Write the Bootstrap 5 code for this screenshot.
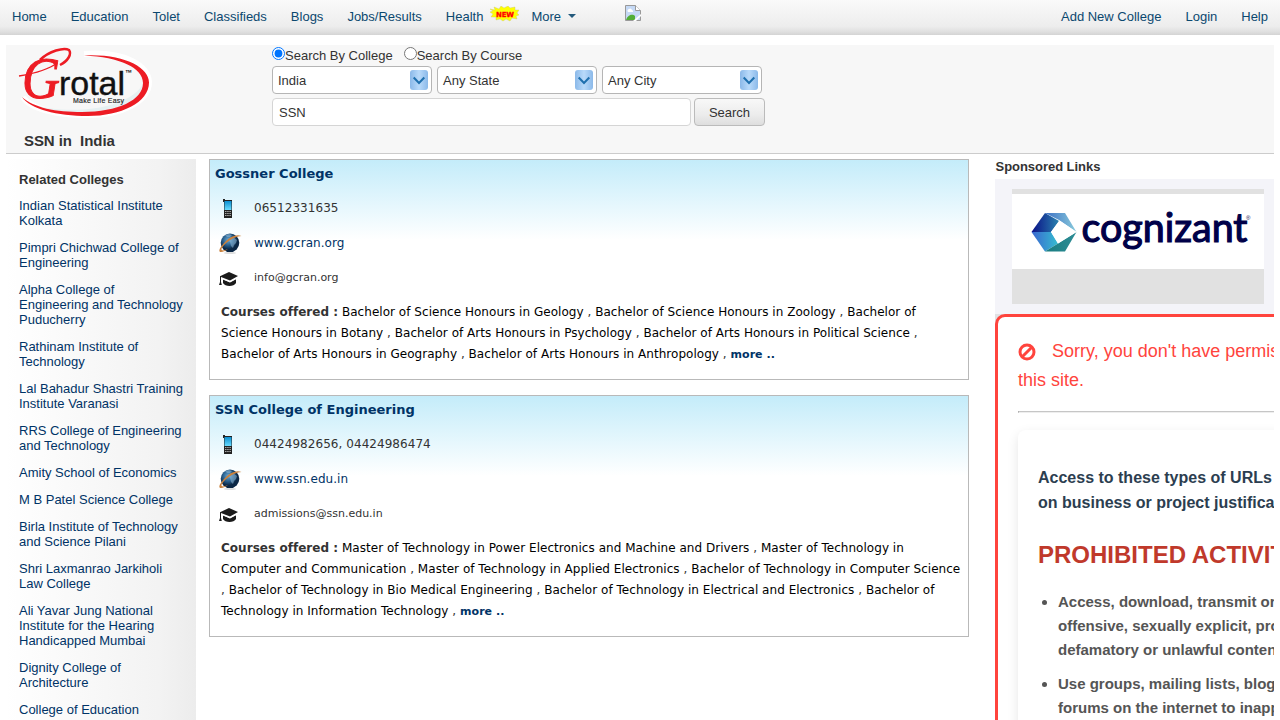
<!DOCTYPE html>
<html lang="en">
<head>
<meta charset="utf-8">
<meta name="viewport" content="width=device-width, initial-scale=1">
<title>SSN in India</title>
<link rel="stylesheet" href="https://cdn.jsdelivr.net/npm/bootstrap@5.3.0/dist/css/bootstrap.min.css">
<style>
html,body{height:720px;overflow:hidden}
body{font:13px/15px "Liberation Sans",Arial,sans-serif;color:#333;background:#fff}
a{text-decoration:none;color:#036}
.topbar{height:35px;background:linear-gradient(#fafafa,#ededed 75%,#e2e2e2 88%,#d4d4d4);padding:0 0 3px}
.topbar a{color:#0b486f;padding:0 12px;white-space:nowrap}
.topbar .newtag{margin-left:-5px;margin-top:-5px}
.masthead{height:109px;margin:10px 6px 0;background:#f7f7f7;border-bottom:1px solid #ccc}
.brandcol{width:266px;padding:1px 0 0 10px}
.pagehead{font-size:15px;line-height:18px;font-weight:bold;margin:11px 0 0 8px;white-space:pre;letter-spacing:-.07px}
.radios{height:21px;padding-top:2px}
.radios input{width:13px;height:13px;margin:0}
.radios label{padding-top:1px;line-height:15px}
.pick{width:160px;height:28px;border:1px solid #b5b5b5;border-radius:4px;background:#fff;padding:0 3px 0 5px}
.query{width:419px;height:28px;border:1px solid #d5d5d5;border-radius:4px;padding:0 6px;font-size:13px;color:#333}
.go{width:71px;height:28px;border:1px solid #bbb;border-radius:4px;background:linear-gradient(#f8f8f8,#ececec 60%,#dedede);padding:1px 0 0;font-size:13px;line-height:24px;color:#333}
.main-area{margin:5px 6px 0;height:561px}
.related{width:190px;height:561px;padding:13px 8px 0 13px;background:linear-gradient(90deg,#fff,#fbfbfb 25%,#f3f3f3 80%,#ececec);overflow:hidden}
.related h2{font-size:13px;line-height:15px;font-weight:bold;margin:0 0 11px}
.related a{display:block;margin-bottom:12px}
.listing{width:760px;margin-left:13px;font-family:"DejaVu Sans",Verdana,sans-serif;font-size:12px}
.college{border:1px solid #b9b9b9;background:linear-gradient(#c4ecfa,#fff 80px);margin-bottom:15px;padding:5px 5px 14px}
.college h3{font-size:13px;line-height:18px;font-weight:bold;color:#036;margin:0 0 8px}
.info{height:35px;line-height:35px;letter-spacing:.05px}
.info .glyph{width:39px;padding-left:4px}
.mailrow{font-size:11px;height:34px;line-height:33px;letter-spacing:0}
.courses{line-height:21px;margin:7px 0 0 6px;color:#000;white-space:nowrap;letter-spacing:.033px}
.courses i{font-style:normal;color:#333}
.courses b{color:#333}.courses a{font-size:11px;font-weight:bold}
.ads{width:279px;margin-left:26px;overflow:hidden}
.ads h2{font-size:13px;line-height:15px;font-weight:bold;margin:0 0 5px .5px;letter-spacing:-.04px}
.adbox{height:135px;background:#f4f4f9;padding:10px 10px 0 17px}
.adframe{height:115px;background:#e1e1e1;padding-top:5px}
.adframe svg{display:block;background:#fff}
.corner{background:#e1e1e4;width:600px}
.denied{width:600px;height:600px;border:3px solid #ff443d;border-radius:10px;background:#fff;padding:20px;white-space:nowrap}
.sorry{font-size:18px;line-height:29px;color:#ff443d}
.rule{border-top:1px solid #c6c6c6;border-left:1px solid #999;border-bottom:1px solid #eee;height:2px;margin:16px 0 17px}
.policy{height:400px;border-radius:8px;box-shadow:0 4px 12px rgba(0,0,0,.1);padding:35px 20px;font-weight:bold}
.policy p{font-size:16px;line-height:25px;color:#2c3e50;margin:0 0 23px}
.policy h4{font-size:24px;line-height:34px;font-weight:bold;color:#c0392b;margin:0 0 18px}
.policy ul{padding-left:20px;margin:0;font-size:15px;line-height:24px;color:#555}
.policy li{margin-bottom:10px}
</style>
</head>
<body>
<svg width="0" height="0" class="position-absolute">
<defs>
<linearGradient id="scr" x1="0" y1="0" x2="0" y2="1"><stop stop-color="#0b8ed0"/><stop offset="1" stop-color="#69dcff"/></linearGradient>
<radialGradient id="sea" cx=".4" cy=".35"><stop stop-color="#69a9d4"/><stop offset=".55" stop-color="#2a618f"/><stop offset="1" stop-color="#0b2745"/></radialGradient>
<linearGradient id="arrow"><stop stop-color="#8bb9e9"/><stop offset=".5" stop-color="#b9dafa"/><stop offset="1" stop-color="#8bb9e9"/></linearGradient>
<symbol id="phone" viewBox="0 0 10 19"><path d="M0 0h2v1h7v18H1V3H0z" fill="#222"/><path d="M1.500 2h7v9h-7z" fill="url(#scr)"/><path d="M2 12.500h6M2 14.500h6M2 16.500h6" stroke="#aaa" stroke-dasharray="1.500 .7"/></symbol>
<symbol id="globe" viewBox="0 0 23 21"><ellipse cx="11" cy="20" rx="6" ry="1" fill="#ddd"/><circle cx="11" cy="9.800" r="9.300" fill="url(#sea)"/><path d="M6 2l4-1 3 1-2 2-3 0zM10 5l4-1 4 3-1 3-2 2-1 3-2-2-1-4-2-2z" fill="#9cc3df" opacity=".5"/><path d="M22.500 3C18 1 12 3 7 8 3 12-1 17 .800 18.700 2.500 19.800 7 17.500 9 16 5 17.800 2 18 2.500 15.800 4 12 13 3.500 22.500 3z" fill="#c9813d"/></symbol>
<symbol id="cap" viewBox="0 0 19 15"><path d="M10 0l9 4-8 4.500L2 5v5l.8 3H0l1-3V4.200z" fill="#1b1b1b"/><path d="M4 7.500l7 3 6-3.200V11c-2 4-11 4-13 0z" fill="#1b1b1b"/><path d="M3.500 6.800l7.500 3 7-3.800" fill="none" stroke="#fff" stroke-width=".8"/></symbol>
<symbol id="drop" viewBox="0 0 18 20"><rect width="18" height="20" rx="3" fill="url(#arrow)"/><path d="M3.700 7.500l5.300 5.500 5.300-5.500" fill="none" stroke="#1f70ae" stroke-width="2"/></symbol>
</defs>
</svg>

<nav class="topbar d-flex align-items-center">
<a href="#">Home</a><a href="#">Education</a><a href="#">Tolet</a><a href="#">Classifieds</a><a href="#">Blogs</a><a href="#">Jobs/Results</a><a href="#">Health</a>
<svg class="newtag" width="29" height="16" viewBox="0 0 29 16"><path d="M0 3l5 1-1-3 5 2 2-3 3 2 4-2 2 2 5-1 0 3 4 0-2 3 2 2-3 1 1 3-5-1-2 3-4-2-3 2-3-2-4 1 0-3-5 0 2-3-3-2 3-1z" fill="#ff0" stroke="#c8c86a" stroke-width=".4"/><text x="6" y="10.500" font-family="DejaVu Sans" font-weight="bold" font-size="7" textLength="18" fill="#f00" stroke="#f00" stroke-width=".3">NEW</text></svg>
<a href="#" class="more">More <svg width="8" height="4" viewBox="0 0 8 4" style="vertical-align:3px;margin-left:3px"><path d="M0 0h8L4 4z" fill="#245a7c"/></svg></a>
<svg class="broken" width="16" height="16" viewBox="0 0 16 16" style="margin:-6px 0 0 37px"><path d="M.5.5h10l5 5v10H.5z" fill="#c5d9f5" stroke="#999"/><path d="M10.500.5v5h5" fill="#fff" stroke="#999"/><path d="M3 7a2 2 0 011-3 2 2 0 013 1 1.500 1.500 0 011 2z" fill="#fff"/><path d="M1 15c2-6 7-6 9-4v4z" fill="#52ae37"/><path d="M8 16l8-7v2l-5 5z" fill="#fff"/></svg>
<div class="ms-auto d-flex"><a href="#">Add New College</a><a href="#">Login</a><a href="#">Help</a></div>
</nav>

<header class="masthead d-flex">
<div class="brandcol">
<svg class="d-block" width="140" height="75" viewBox="16 46 140 75">
<path d="M84 54c42-3 64 12 65 28 0 20-28 33-61 33-31 0-58-6-65-18" fill="none" stroke="#fff" stroke-width="6"/>
<path d="M32 104c30 11 98 8 112-22 4 18-24 31-56 31-24 0-44-4-56-9z" fill="#e6f0f1"/>
<path d="M84 55.500c40-2 65 12 65 27 0 20-28 33.500-61 33.500-31 0-58-7-66-19 12 11 34 15 60 15 36 0 61-12 61-29 0-15-23-26-59-27.500z" fill="#ed1c24"/>
<path d="M19 76c12-2 29-6 38-13" fill="none" stroke="#ed1c24" stroke-width="1.300"/>
<path d="M60 65c8-4 12-11 9-15-5-3-20 1-29 10" fill="none" stroke="#ed1c24" stroke-width="2.500"/>
<text x="22" y="98" font-family="Liberation Serif" font-style="italic" font-size="60" fill="#ed1c24" stroke="#ed1c24" textLength="38" lengthAdjust="spacingAndGlyphs">G</text>
<text x="59" y="95" font-family="Liberation Sans" font-size="33" fill="#111" stroke="#111" stroke-width=".4" textLength="66" lengthAdjust="spacingAndGlyphs">rotal</text>
<text x="125" y="76" font-family="Liberation Sans" font-size="9" font-weight="bold" fill="#111" textLength="7" lengthAdjust="spacingAndGlyphs">™</text>
<text x="73" y="103" font-family="Liberation Sans" font-size="7" fill="#222" stroke="#222" stroke-width=".15" textLength="51">Make Life Easy</text>
</svg>
<h1 class="pagehead">SSN in  India</h1>
</div>
<form>
<div class="radios d-flex"><input type="radio" name="by" id="r1" checked><label for="r1">Search By College</label><input type="radio" name="by" id="r2" style="margin-left:11px"><label for="r2">Search By Course</label></div>
<div class="d-flex mb-1" style="gap:5px">
<div class="pick d-flex align-items-center justify-content-between">India<svg width="18" height="20"><use href="#drop"/></svg></div>
<div class="pick d-flex align-items-center justify-content-between">Any State<svg width="18" height="20"><use href="#drop"/></svg></div>
<div class="pick d-flex align-items-center justify-content-between">Any City<svg width="18" height="20"><use href="#drop"/></svg></div>
</div>
<div class="d-flex" style="gap:3px"><input class="query" type="text" value="SSN"><button type="button" class="go">Search</button></div>
</form>
</header>

<div class="main-area d-flex">
<aside class="related flex-shrink-0">
<h2>Related Colleges</h2>
<a href="#">Indian Statistical Institute<br>Kolkata</a><a href="#">Pimpri Chichwad College of<br>Engineering</a><a href="#">Alpha College of<br>Engineering and Technology<br>Puducherry</a><a href="#">Rathinam Institute of<br>Technology</a><a href="#">Lal Bahadur Shastri Training<br>Institute Varanasi</a><a href="#">RRS College of Engineering<br>and Technology</a><a href="#">Amity School of Economics</a><a href="#">M B Patel Science College</a><a href="#">Birla Institute of Technology<br>and Science Pilani</a><a href="#">Shri Laxmanrao Jarkiholi<br>Law College</a><a href="#">Ali Yavar Jung National<br>Institute for the Hearing<br>Handicapped Mumbai</a><a href="#">Dignity College of<br>Architecture</a><a href="#">College of Education<br>Pilani</a>
</aside>

<main class="listing flex-shrink-0">
<section class="college">
<h3>Gossner College</h3>
<div class="info d-flex"><span class="glyph d-flex align-items-center"><svg class="ms-1" width="10" height="19"><use href="#phone"/></svg></span>06512331635</div>
<div class="info d-flex"><span class="glyph d-flex align-items-center"><svg width="23" height="21"><use href="#globe"/></svg></span><a href="#">www.gcran.org</a></div>
<div class="info mailrow d-flex"><span class="glyph d-flex align-items-center"><svg style="margin:3px 0 0 0" width="19" height="15"><use href="#cap"/></svg></span>info@gcran.org</div>
<div class="courses"><b>Courses offered :</b> Bachelor of Science Honours in Geology <i>,</i> Bachelor of Science Honours in Zoology <i>,</i> Bachelor of<br>Science Honours in Botany <i>,</i> Bachelor of Arts Honours in Psychology <i>,</i> Bachelor of Arts Honours in Political Science <i>,</i><br>Bachelor of Arts Honours in Geography <i>,</i> Bachelor of Arts Honours in Anthropology <i>,</i> <a href="#">more ..</a></div>
</section>
<section class="college">
<h3>SSN College of Engineering</h3>
<div class="info d-flex"><span class="glyph d-flex align-items-center"><svg class="ms-1" width="10" height="19"><use href="#phone"/></svg></span>04424982656, 04424986474</div>
<div class="info d-flex"><span class="glyph d-flex align-items-center"><svg width="23" height="21"><use href="#globe"/></svg></span><a href="#">www.ssn.edu.in</a></div>
<div class="info mailrow d-flex"><span class="glyph d-flex align-items-center"><svg style="margin:3px 0 0 0" width="19" height="15"><use href="#cap"/></svg></span>admissions@ssn.edu.in</div>
<div class="courses"><b>Courses offered :</b> Master of Technology in Power Electronics and Machine and Drivers <i>,</i> Master of Technology in<br>Computer and Communication <i>,</i> Master of Technology in Applied Electronics <i>,</i> Bachelor of Technology in Computer Science<br><i>,</i> Bachelor of Technology in Bio Medical Engineering <i>,</i> Bachelor of Technology in Electrical and Electronics <i>,</i> Bachelor of<br>Technology in Information Technology <i>,</i> <a href="#">more ..</a></div>
</section>
</main>

<aside class="ads flex-shrink-0">
<h2>Sponsored Links</h2>
<div class="adbox"><div class="adframe">
<svg width="252" height="75" viewBox="0 0 252 75">
<defs><linearGradient id="ca"><stop stop-color="#0a0f86"/><stop offset="1" stop-color="#2a83b0"/></linearGradient><linearGradient id="cb"><stop stop-color="#3a66d0"/><stop offset="1" stop-color="#35bcd0"/></linearGradient><linearGradient id="cc"><stop stop-color="#3c70c4"/><stop offset="1" stop-color="#8acbdc"/></linearGradient><linearGradient id="cd"><stop stop-color="#187c80"/><stop offset="1" stop-color="#2e8d96"/></linearGradient></defs>
<path d="M19.500 38L33 19l14 8-8 11z" fill="url(#ca)"/><path d="M33 19h20l11.500 19L47 26z" fill="url(#cc)"/><path d="M19.500 38H39l7 11.500-13 8z" fill="url(#cb)"/><path d="M33 57.500L46 49.500 64.500 38 53 57.500z" fill="url(#cd)"/><path d="M47.500 26.500l17 11.500L46 49.500 39 38z" fill="#fff"/>
<text x="69.500" y="48" font-family="Lato" font-weight="400" font-size="40" fill="#000048" stroke="#000048" stroke-width="1.200" textLength="166" lengthAdjust="spacingAndGlyphs">cognizant</text><text x="234" y="26" font-family="Liberation Sans" font-size="6" fill="#000048">®</text>
</svg></div></div>
<div class="corner"><div class="denied">
<div class="sorry"><svg width="18" height="18" viewBox="0 0 18 18" style="margin-right:16px;vertical-align:-4px"><circle cx="9" cy="9" r="7" fill="none" stroke="#ff443d" stroke-width="3"/><path d="M4 14L14 4" stroke="#ff443d" stroke-width="3"/></svg>Sorry, you don't have permission to visit<br>this site.</div>
<div class="rule"></div>
<div class="policy"><p>Access to these types of URLs is allowed based<br>on business or project justification</p><h4>PROHIBITED ACTIVITIES</h4>
<ul><li>Access, download, transmit or store<br>offensive, sexually explicit, profane,<br>defamatory or unlawful content</li><li>Use groups, mailing lists, blogs or<br>forums on the internet to inappropriately</li></ul></div>
</div></div>
</aside>
</div>
<script src="https://cdn.jsdelivr.net/npm/bootstrap@5.3.0/dist/js/bootstrap.bundle.min.js"></script>
</body>
</html>
